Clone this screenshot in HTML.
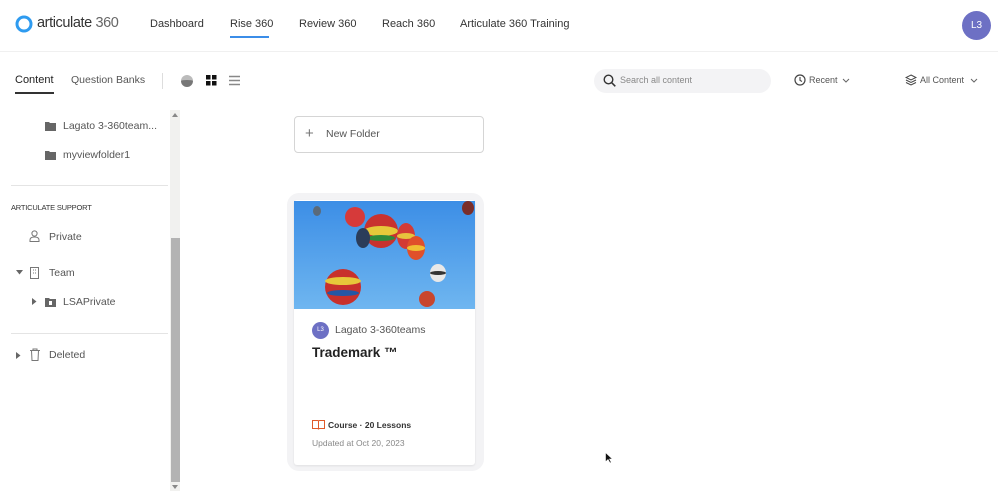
<!DOCTYPE html>
<html><head><meta charset="utf-8"><style>
*{box-sizing:border-box;margin:0;padding:0}
body{width:998px;height:491px;overflow:hidden;background:#fff;font-family:"Liberation Sans",sans-serif;color:#333;position:relative}
.a{position:absolute;white-space:nowrap}
.nav{font-size:11px;color:#333}
.side{font-size:10.5px;color:#555}
</style></head><body>
<!-- header -->
<svg class="a" style="left:14px;top:14px" width="20" height="20"><circle cx="10" cy="10" r="7" fill="none" stroke="#2e9bf0" stroke-width="3"/></svg>
<div class="a" style="left:37px;top:15px;font-size:14.5px;color:#333;letter-spacing:-0.4px">articulate <span style="color:#666">360</span></div>
<div class="a nav" style="left:150px;top:18px">Dashboard</div>
<div class="a nav" style="left:230px;top:18px">Rise 360</div>
<div class="a" style="left:230px;top:36px;width:39px;height:2px;background:#3b8de8"></div>
<div class="a nav" style="left:299px;top:18px">Review 360</div>
<div class="a nav" style="left:382px;top:18px">Reach 360</div>
<div class="a nav" style="left:460px;top:18px">Articulate 360 Training</div>
<div class="a" style="left:962px;top:11px;width:29px;height:29px;border-radius:50%;background:#6d70c4;color:#fff;font-size:10px;text-align:center;line-height:29px">L3</div>
<div class="a" style="left:0;top:51px;width:998px;height:1px;background:#f0f0f0"></div>
<!-- sub toolbar -->
<div class="a" style="left:15px;top:74px;font-size:11px;color:#222">Content</div>
<div class="a" style="left:15px;top:92px;width:39px;height:2px;background:#333"></div>
<div class="a" style="left:71px;top:74px;font-size:10.5px;color:#555">Question Banks</div>
<div class="a" style="left:162px;top:73px;width:1px;height:16px;background:#ddd"></div>
<div class="a" style="left:181px;top:75px;width:12px;height:12px;border-radius:50%;background:#777;border-top:5px solid #bbb"></div>
<svg class="a" style="left:206px;top:75px" width="11" height="11"><rect x="0" y="0" width="4.5" height="4.5" fill="#111"/><rect x="6" y="0" width="4.5" height="4.5" fill="#111"/><rect x="0" y="6" width="4.5" height="4.5" fill="#111"/><rect x="6" y="6" width="4.5" height="4.5" fill="#111"/></svg>
<svg class="a" style="left:229px;top:75px" width="11" height="11"><path d="M0 1.5H11M0 5.5H11M0 9.5H11" stroke="#888" stroke-width="1.4"/></svg>
<div class="a" style="left:594px;top:69px;width:177px;height:24px;border-radius:12px;background:#f3f3f5"></div>
<svg class="a" style="left:603px;top:74px" width="13" height="13"><circle cx="5.5" cy="5.5" r="4.3" fill="none" stroke="#333" stroke-width="1.4"/><path d="M8.7 8.7L12.3 12.3" stroke="#333" stroke-width="1.5"/></svg>
<div class="a" style="left:620px;top:75px;font-size:9px;color:#888">Search all content</div>
<svg class="a" style="left:794px;top:74px" width="12" height="12"><circle cx="6" cy="6" r="5" fill="none" stroke="#444" stroke-width="1.2"/><path d="M6 3V6.3L8 7.5" stroke="#444" stroke-width="1.1" fill="none"/></svg>
<div class="a" style="left:809px;top:75px;font-size:9px;color:#555">Recent</div>
<svg class="a" style="left:842px;top:78px" width="8" height="5"><path d="M1 1L4 4L7 1" stroke="#666" fill="none"/></svg>
<svg class="a" style="left:905px;top:74px" width="12" height="12"><path d="M6 1L11 3.5L6 6L1 3.5Z M1 6L6 8.5L11 6 M1 8.5L6 11L11 8.5" stroke="#444" fill="none" stroke-width="1"/></svg>
<div class="a" style="left:920px;top:75px;font-size:9px;color:#555">All Content</div>
<svg class="a" style="left:970px;top:78px" width="8" height="5"><path d="M1 1L4 4L7 1" stroke="#666" fill="none"/></svg>
<!-- sidebar -->
<svg class="a" style="left:45px;top:121px" width="11" height="10"><path d="M0 1H4L5 2H11V10H0Z" fill="#666"/></svg>
<div class="a side" style="left:63px;top:120px">Lagato 3-360team...</div>
<svg class="a" style="left:45px;top:150px" width="11" height="10"><path d="M0 1H4L5 2H11V10H0Z" fill="#666"/></svg>
<div class="a side" style="left:63px;top:149px">myviewfolder1</div>
<div class="a" style="left:11px;top:185px;width:157px;height:1px;background:#e4e4e4"></div>
<div class="a" style="left:11px;top:203px;font-size:7.5px;color:#333;letter-spacing:-0.2px">ARTICULATE SUPPORT</div>
<svg class="a" style="left:29px;top:230px" width="11" height="12"><circle cx="5.5" cy="3.5" r="2.6" fill="none" stroke="#777"/><path d="M1 11.5V10Q1 7 5.5 7Q10 7 10 10V11.5Z" fill="none" stroke="#777"/></svg>
<div class="a side" style="left:49px;top:231px">Private</div>
<svg class="a" style="left:16px;top:270px" width="7" height="5"><path d="M0 0H7L3.5 4.5Z" fill="#666"/></svg>
<svg class="a" style="left:30px;top:267px" width="9" height="12"><rect x="0.5" y="0.5" width="8" height="11" fill="none" stroke="#777"/><path d="M3 3H4M5 3H6M3 6H4M5 6H6" stroke="#777"/></svg>
<div class="a side" style="left:49px;top:267px">Team</div>
<svg class="a" style="left:32px;top:298px" width="5" height="7"><path d="M0 0L4.5 3.5L0 7Z" fill="#666"/></svg>
<svg class="a" style="left:45px;top:297px" width="11" height="10"><path d="M0 1H4L5 2H11V10H0Z" fill="#666"/><rect x="4" y="4" width="3" height="4" fill="#fff"/></svg>
<div class="a side" style="left:63px;top:296px">LSAPrivate</div>
<div class="a" style="left:11px;top:333px;width:157px;height:1px;background:#e4e4e4"></div>
<svg class="a" style="left:16px;top:352px" width="5" height="7"><path d="M0 0L4.5 3.5L0 7Z" fill="#666"/></svg>
<svg class="a" style="left:30px;top:348px" width="10" height="13"><path d="M0 2.5H10M3 2.5V1H7V2.5M1.5 2.5L2 12.5H8L8.5 2.5" fill="none" stroke="#777"/></svg>
<div class="a side" style="left:49px;top:349px">Deleted</div>
<!-- scrollbar -->
<div class="a" style="left:170px;top:110px;width:10px;height:381px;background:#f1f1ef"></div>
<div class="a" style="left:171px;top:238px;width:9px;height:244px;background:#b3b3b3"></div>
<svg class="a" style="left:172px;top:113px" width="6" height="4"><path d="M0 4L3 0L6 4Z" fill="#888"/></svg>
<svg class="a" style="left:172px;top:485px" width="6" height="4"><path d="M0 0L3 4L6 0Z" fill="#888"/></svg>
<!-- new folder -->
<div class="a" style="left:294px;top:116px;width:190px;height:37px;border:1px solid #d5d5d5;border-radius:4px"></div>
<div class="a" style="left:305px;top:125px;font-size:15px;color:#777">+</div>
<div class="a" style="left:326px;top:128px;font-size:10.5px;color:#555">New Folder</div>
<!-- card -->
<div class="a" style="left:287px;top:193px;width:197px;height:278px;border-radius:12px;background:#f3f3f5"></div>
<div class="a" style="left:294px;top:200px;width:181px;height:265px;background:#fff;border-radius:3px;box-shadow:0 1px 2px rgba(0,0,0,.08)"></div>
<svg class="a" style="left:294px;top:201px" width="181" height="108">
<defs><linearGradient id="g" x1="0" y1="0" x2="0" y2="1"><stop offset="0" stop-color="#3c8ee6"/><stop offset="1" stop-color="#6fb6f0"/></linearGradient></defs>
<rect width="181" height="108" fill="url(#g)"/>
<ellipse cx="61" cy="16" rx="10" ry="10" fill="#d63a3a"/>
<ellipse cx="87" cy="30" rx="17" ry="17" fill="#c8322f"/><ellipse cx="87" cy="30" rx="17" ry="5" fill="#e6c93a"/><ellipse cx="87" cy="37" rx="14" ry="3" fill="#2f8a3b"/>
<ellipse cx="69" cy="37" rx="7" ry="10" fill="#2b3d5a"/>
<ellipse cx="112" cy="35" rx="9" ry="13" fill="#d33b35"/><ellipse cx="112" cy="35" rx="9" ry="3" fill="#e7c33d"/>
<ellipse cx="122" cy="47" rx="9" ry="12" fill="#e0502a"/><ellipse cx="122" cy="47" rx="9" ry="3" fill="#f0c033"/>
<ellipse cx="144" cy="72" rx="8" ry="9" fill="#e8e8e8"/><ellipse cx="144" cy="72" rx="8" ry="2" fill="#333"/>
<ellipse cx="49" cy="86" rx="18" ry="18" fill="#c8302c"/><ellipse cx="49" cy="80" rx="18" ry="4" fill="#e7c73a"/><ellipse cx="49" cy="92" rx="16" ry="3" fill="#2457a5"/>
<ellipse cx="133" cy="98" rx="8" ry="8" fill="#c8462e"/>
<ellipse cx="174" cy="7" rx="6" ry="7" fill="#7a2e2a"/>
<ellipse cx="23" cy="10" rx="4" ry="5" fill="#5a6a7a"/>
</svg>
<div class="a" style="left:312px;top:322px;width:17px;height:17px;border-radius:50%;background:#6d70c4;color:#fff;font-size:6px;text-align:center;line-height:17px">L3</div>
<div class="a" style="left:335px;top:324px;font-size:10.5px;color:#555">Lagato 3-360teams</div>
<div class="a" style="left:312px;top:345px;font-size:13.5px;color:#222;font-weight:bold">Trademark ™</div>
<svg class="a" style="left:312px;top:420px" width="13" height="10"><path d="M0.5 0.5H5.5Q6.5 0.5 6.5 1.5V9.5Q6.5 8.5 5.5 8.5H0.5Z M12.5 0.5H7.5Q6.5 0.5 6.5 1.5V9.5Q6.5 8.5 7.5 8.5H12.5Z" fill="none" stroke="#e05a2a"/></svg>
<div class="a" style="left:328px;top:420px;font-size:8.5px;color:#333;font-weight:bold">Course · 20 Lessons</div>
<div class="a" style="left:312px;top:438px;font-size:8.5px;color:#888">Updated at Oct 20, 2023</div>
<svg class="a" style="left:605px;top:452px" width="8" height="12"><path d="M0.5 0.5V10L3 7.5L5 11L6.3 10.3L4.5 7H7.5Z" fill="#111" stroke="#fff" stroke-width="0.6"/></svg>
</body></html>
